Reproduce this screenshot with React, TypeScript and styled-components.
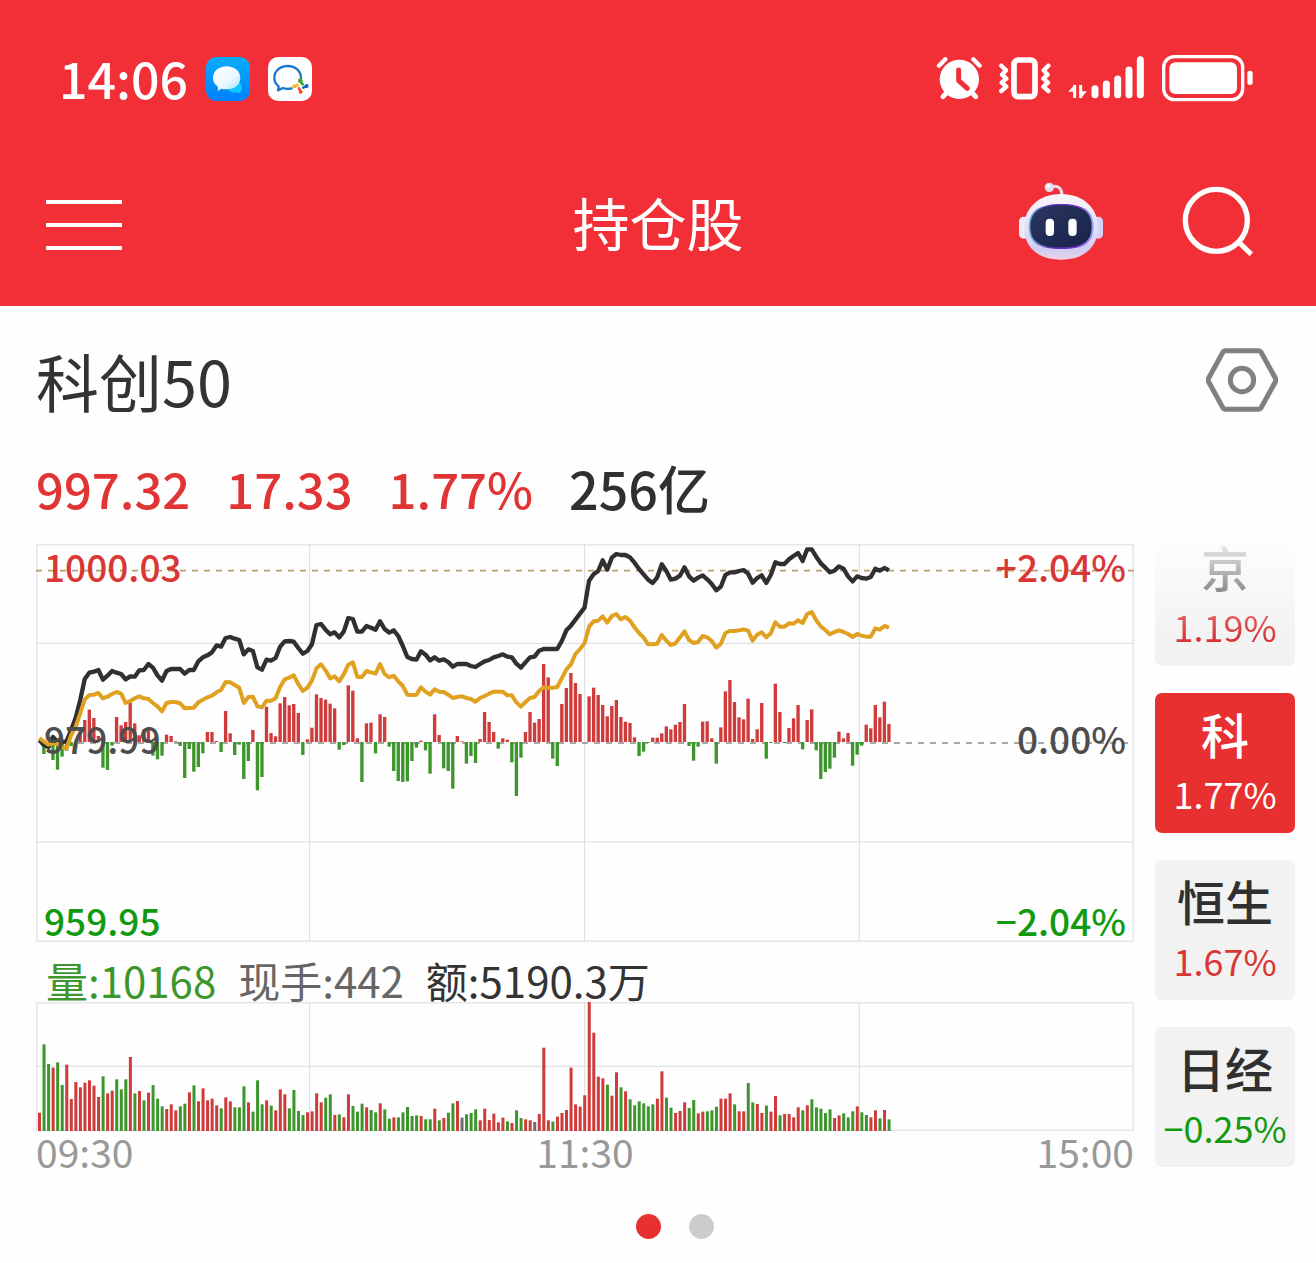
import React, { useState } from "react";
import styled, { createGlobalStyle } from "styled-components";

const RISE = "#cf3a3a";
const FALL = "#3c962c";
const FLAT = "#6e6a70";

const GlobalStyle = createGlobalStyle`
  *, *::before, *::after { box-sizing: border-box; }
  body {
    margin: 0;
    background: #fefefe;
    color: #333;
    font-family: "Noto Sans CJK SC", "Noto Sans", sans-serif;
  }
  button { display: block; font: inherit; color: inherit; border: 0; padding: 0; background: none; cursor: pointer; }
  svg { display: block; }
  h1, h2, p { margin: 0; padding: 0; font-weight: inherit; }
`;

const Header = styled.header`
  background: #f22f37;
  color: #fff;
  padding: 56px 0 40px;
`;
const StatusBar = styled.div`
  display: flex;
  justify-content: space-between;
  align-items: center;
  height: 46px;
  padding: 0 63px 0 59px;
`;
const StatusGroup = styled.div<{ $gap: number }>`
  display: flex;
  align-items: center;
  gap: ${(p) => p.$gap}px;
`;
const Clock = styled.time`
  padding-bottom: 4px;
  font-size: 50px;
  line-height: 42px;
  font-weight: 500;
`;
const NavBar = styled.nav`
  display: grid;
  grid-template-columns: 1fr auto 1fr;
  align-items: center;
  height: 84px;
  margin-top: 80px;
  padding: 0 46px;
`;
const NavTitle = styled.h1`
  padding-bottom: 8px;
  font-size: 57px;
  line-height: 76px;
`;
const NavActions = styled.div`
  display: flex;
  align-items: center;
  justify-content: flex-end;
  gap: 79px;
  padding: 0 17px 8px 0;
`;
const Content = styled.main`
  display: grid;
  grid-template-columns: minmax(0, 1fr) 140px;
  column-gap: 21px;
  padding: 32px 21px 0 36px;
`;
const Main = styled.section`
  min-width: 0;
`;
const IndexName = styled.h2`
  font-size: 63px;
  line-height: 84px;
`;
const QuoteRow = styled.p`
  display: flex;
  gap: 36px;
  margin-top: 36px;
  line-height: 60px;
  font-weight: 500;
`;
const Quote = styled.span<{ $rise?: boolean }>`
  color: ${(p) => (p.$rise ? "#e13434" : "#303030")};
  font-size: ${(p) => (p.$rise ? 49 : 52)}px;
`;
const ChartBox = styled.div<{ $height: number }>`
  position: relative;
  height: ${(p) => p.$height}px;
  svg { width: 100%; height: 100%; }
`;
const PriceChart = styled(ChartBox)`
  margin-top: 26px;
`;
const ScaleLabel = styled.span<{ $color: string; $side: "left" | "right"; $top: number }>`
  position: absolute;
  top: ${(p) => p.$top}px;
  ${(p) => p.$side}: 8px;
  color: ${(p) => p.$color};
  font-size: 37px;
  line-height: 44px;
  font-weight: 500;
`;
const VolumeLegend = styled.p`
  display: flex;
  gap: 22px;
  margin-top: 16px;
  padding-left: 10px;
  font-size: 42px;
  line-height: 44px;
`;
const LegendItem = styled.span<{ $color: string }>`
  color: ${(p) => p.$color};
`;
const TimeAxis = styled.div`
  display: flex;
  justify-content: space-between;
  color: #999;
  font-size: 39px;
  line-height: 40px;
`;
const Side = styled.aside`
  display: flex;
  flex-direction: column;
`;
const SettingsButton = styled.button`
  align-self: flex-end;
  margin: 10px 17px 114px 0;
`;
const IndexList = styled.div`
  display: flex;
  flex-direction: column;
  gap: 27px;
`;
const IndexCard = styled.button<{ $active: boolean; $faded?: boolean }>`
  display: flex;
  flex-direction: column;
  align-items: center;
  height: 140px;
  padding-top: 10px;
  border-radius: 7px;
  background: ${(p) => (p.$active ? "#e83030" : "#f2f2f2")};
  color: ${(p) => (p.$active ? "#fff" : "#303030")};
  mask-image: ${(p) => (p.$faded ? "linear-gradient(transparent 8px, #000 112px)" : "none")};
`;
const CardName = styled.span`
  font-size: 48px;
  line-height: 60px;
  font-weight: 500;
`;
const CardChange = styled.span<{ $color: string }>`
  font-size: 36px;
  line-height: 60px;
  color: ${(p) => p.$color};
`;
const Pager = styled.div`
  display: flex;
  justify-content: center;
  gap: 28px;
  margin-left: 34px;
  padding: 43px 0 24px;
`;
const PagerDot = styled.button<{ $active: boolean }>`
  width: 25px;
  height: 25px;
  border-radius: 50%;
  background: ${(p) => (p.$active ? "#e83030" : "#ccc")};
`;

/* Minute series. Chart units are thirds of a pixel at the design width. */
const STEP = 13.63;
const FIRST = 10;
const xAt = (i: number) => FIRST + i * STEP;

const INDEX_LINE = [
  615, 630, 636, 606, 620, 622, 618, 585, 548, 495, 432, 413, 410, 405, 434, 422, 408, 413, 417, 433,
  424, 425, 406, 405, 387, 398, 421, 437, 408, 402, 402, 402, 416, 405, 405, 379, 367, 361, 352, 331,
  335, 309, 306, 311, 315, 358, 343, 348, 397, 404, 374, 377, 369, 335, 319, 318, 320, 339, 356, 348,
  328, 270, 267, 284, 298, 292, 307, 290, 249, 252, 290, 290, 273, 278, 284, 259, 282, 293, 286, 303,
  333, 366, 372, 374, 349, 359, 376, 367, 377, 373, 381, 395, 387, 387, 387, 393, 396, 387, 379, 375,
  367, 363, 358, 365, 367, 386, 398, 382, 367, 365, 347, 342, 342, 342, 342, 318, 286, 272, 254, 236,
  218, 137, 118, 108, 76, 104, 68, 57, 60, 60, 67, 83, 102, 118, 134, 144, 127, 88, 108, 134,
  131, 122, 97, 124, 137, 128, 121, 133, 147, 166, 155, 120, 112, 112, 108, 105, 116, 143, 129, 121,
  144, 120, 82, 87, 87, 73, 63, 54, 78, 43, 43, 65, 85, 98, 112, 107, 94, 101, 124, 139,
  124, 129, 131, 126, 101, 107, 99, 106,
];
const AVERAGE_LINE = [
  609, 619, 629, 625, 627, 636, 640, 600, 575, 535, 494, 480, 479, 474, 490, 485, 477, 471, 476, 504,
  498, 490, 484, 490, 492, 504, 514, 529, 504, 501, 501, 505, 520, 519, 518, 502, 494, 487, 482, 472,
  465, 441, 442, 450, 458, 504, 486, 485, 514, 517, 497, 497, 490, 456, 433, 428, 421, 447, 468, 458,
  437, 400, 388, 406, 430, 424, 439, 418, 389, 382, 426, 426, 408, 412, 416, 387, 417, 427, 422, 439,
  453, 479, 480, 479, 457, 470, 479, 463, 470, 471, 479, 489, 486, 484, 489, 492, 500, 489, 483, 476,
  470, 470, 470, 481, 481, 502, 515, 501, 489, 486, 468, 457, 458, 458, 456, 430, 403, 388, 357, 342,
  325, 275, 259, 257, 244, 263, 243, 237, 253, 246, 257, 277, 294, 308, 328, 328, 326, 300, 317, 330,
  325, 307, 289, 315, 324, 321, 303, 307, 318, 338, 326, 294, 288, 288, 286, 283, 287, 317, 299, 292,
  307, 295, 262, 275, 275, 265, 266, 256, 264, 237, 231, 256, 274, 285, 298, 291, 286, 291, 297, 306,
  297, 302, 305, 305, 280, 284, 273, 278,
];
const MOMENTUM = [
  0, -36, -14, -54, -83, -44, -26, -12, -20, 33, 66, 97, 72, 18, -77, -84, -11, 75, 50, 60,
  118, 56, 20, 38, 38, -41, -52, -41, 22, 18, 2, -12, -108, -21, -89, -75, -34, 30, 30, 3,
  -30, 93, 26, -39, -8, -111, -57, 36, -145, -105, 106, 27, 17, 116, 135, 110, 114, 87, -39, 8,
  43, 143, 132, 127, 115, 101, -23, -9, 170, 154, 11, -120, 56, 58, -34, 83, 75, -14, -87, -117,
  -120, -118, -57, -17, 4, -25, -95, 83, 21, -79, -87, -140, 18, 2, -65, -42, -63, 9, 90, 60,
  30, -20, 11, 7, -61, -162, -47, 30, 90, 58, 69, 234, 194, -50, -72, 114, 162, 207, 177, 144,
  0, 137, 163, 141, 111, 77, 108, 126, 75, 61, 57, 14, -42, -29, -3, 13, 13, 26, 47, 38,
  52, 60, 114, -12, -56, -14, 61, 62, 11, -65, 44, 152, 186, 120, 74, 68, 130, 9, 38, 117,
  -50, -3, 175, 90, -3, 42, 71, 111, -22, 66, 98, -25, -111, -90, -80, -47, 31, 11, 27, -71,
  -38, -11, 52, 41, 111, 74, 121, 54,
];
/* Each entry: r = rise, g = fall, x = flat, followed by the bar height. */
const VOLUME = (
  "r55 g260 g201 r190 g206 g138 r199 r96 r147 r131 r145 r152 r136 r102 g164 r113 r121 g155 g125 g155 " +
  "r222 g113 r120 g92 r115 g138 g97 g74 r66 r80 r62 g74 g82 r116 g137 r89 r128 r92 r97 r77 " +
  "g68 r101 r89 g71 g71 g134 r86 g58 g152 g80 r92 g76 r62 r125 r110 g68 g123 g60 g48 r56 " +
  "r59 r113 r86 g100 g110 r48 g50 r41 r110 g75 g58 g82 r71 g63 g56 r83 g65 g37 r41 g41 " +
  "g56 g72 g45 g47 r45 g35 g35 r67 g32 r39 g55 g83 r90 x40 g50 g54 g65 r32 r67 r33 " +
  "r52 r26 r40 g29 r24 g62 g39 r35 r32 x27 r51 r250 r32 g28 r43 r54 r63 r190 r80 r73 " +
  "r107 r387 r295 r163 r158 g139 r106 r176 g131 r119 g95 g77 g89 g83 g74 g80 r97 r179 g100 g70 " +
  "r54 r60 r86 g69 g93 r53 r58 g59 g62 g73 r97 r97 r113 g80 r59 r59 g144 g86 r81 r54 " +
  "g76 r58 r105 g47 r51 r51 r41 r71 g62 r77 g95 g71 g67 g54 g65 r39 r47 g53 g41 g59 " +
  "r74 g56 g48 r41 r62 g38 r63 g35"
).split(" ");

const toPoints = (series: number[]) => series.map((y, i) => `${xAt(i)},${y - 27}`).join(" ");

const Grid = ({ height, rows }: { height: number; rows: number[] }) => (
  <g fill="none" stroke="#dcdcdc" strokeWidth={3}>
    <rect x={2} y={2} width={3290} height={height - 4} stroke="#e6e6e6" strokeWidth={5} />
    {[821, 1646, 2470].map((x) => (
      <line key={x} x1={x} x2={x} y1={0} y2={height} />
    ))}
    {rows.map((y) => (
      <line key={y} x1={0} x2={3294} y1={y} y2={y} />
    ))}
  </g>
);

const PriceSvg = () => (
  <svg viewBox="0 0 3294 1194" preserveAspectRatio="none" role="img" aria-label="科创50 分时走势">
    <Grid height={1194} rows={[298, 894]} />
    <line x1={0} x2={3294} y1={80} y2={80} stroke="#b8a070" strokeWidth={5} strokeDasharray="18 18" />
    <line x1={18} x2={3294} y1={597} y2={597} stroke="#8f8b8b" strokeWidth={5} strokeDasharray="18 18" />
    {MOMENTUM.map((v, i) =>
      v === 0 ? null : (
        <rect
          key={i}
          x={xAt(i) - 5}
          y={v > 0 ? 594 - v : 594}
          width={10}
          height={Math.abs(v)}
          fill={v > 0 ? RISE : FALL}
        />
      )
    )}
    <polyline points={toPoints(INDEX_LINE)} fill="none" stroke="#303030" strokeWidth={13} strokeLinejoin="round" />
    <polyline points={toPoints(AVERAGE_LINE)} fill="none" stroke="#e0a020" strokeWidth={12} strokeLinejoin="round" />
  </svg>
);

const VolumeSvg = () => (
  <svg viewBox="0 0 3294 387" preserveAspectRatio="none" role="img" aria-label="成交量">
    <Grid height={387} rows={[193]} />
    {VOLUME.map((entry, i) => {
      const h = Number(entry.slice(1));
      const fill = entry[0] === "r" ? RISE : entry[0] === "g" ? FALL : FLAT;
      return <rect key={i} x={xAt(i) - 4} y={387 - h} width={9} height={h} fill={fill} />;
    })}
  </svg>
);

const MessageAppIcon = () => (
  <svg width="44" height="44" viewBox="0 0 132 132" aria-hidden="true">
    <defs>
      <linearGradient id="msgBg" x1="0" y1="0" x2="0" y2="1">
        <stop offset="0" stopColor="#06adfb" />
        <stop offset="1" stopColor="#0080fc" />
      </linearGradient>
      <linearGradient id="msgFg" x1="0" y1="0" x2="1" y2="1">
        <stop offset="0" stopColor="#fff" />
        <stop offset=".6" stopColor="#e8f7ff" />
        <stop offset="1" stopColor="#9adcff" />
      </linearGradient>
    </defs>
    <rect width="132" height="132" rx="32" fill="url(#msgBg)" />
    <path d="M96 74c8 4 13 10 12 18 0 5-2 8-5 11l1 6-10-3c-12 2-22-1-28-8z" fill="#10c8fc" />
    <path d="M62 28c24 0 41 15 41 35S86 97 62 97c-6 0-11-1-16-2l-10 7-1-14C26 82 21 73 21 63c0-20 17-35 41-35z" fill="url(#msgFg)" />
  </svg>
);

const WorkChatIcon = () => (
  <svg width="44" height="44" viewBox="0 0 132 132" aria-hidden="true">
    <rect width="132" height="132" rx="30" fill="#fff" />
    <path
      d="M99 63C99 42 82 27 59 27S19 43 19 62c0 11 5 20 13 26l-2 12 14-7c8 3 18 3 27 1"
      fill="none"
      stroke="#1a78d0"
      strokeWidth="7"
      strokeLinejoin="round"
      strokeLinecap="round"
    />
    <g strokeLinecap="round" strokeWidth="8" fill="none">
      <path d="M96 72l8 10" stroke="#43a631" />
      <path d="M116 87l-10 5" stroke="#1369c4" />
      <path d="M98 105l-5-11" stroke="#e8572a" />
      <path d="M78 89l11-5" stroke="#f6bb22" />
    </g>
    <g>
      <circle cx="97" cy="71" r="7" fill="#43a631" />
      <circle cx="116" cy="87" r="6" fill="#1369c4" />
      <circle cx="98" cy="104" r="6" fill="#e8572a" />
      <circle cx="79" cy="88" r="6" fill="#f6bb22" />
    </g>
  </svg>
);

const AlarmIcon = () => (
  <svg width="46" height="46" viewBox="46 50 138 138" fill="none" strokeLinecap="round" aria-hidden="true">
    <circle cx="116" cy="120" r="59" fill="#fff" />
    <path d="M55 79l19-19M158 60l19 19" stroke="#fff" strokeWidth="13" />
    <path d="M78 160l-11 12M154 160l11 12" stroke="#fff" strokeWidth="15" />
    <path d="M114 92v32l26 23" stroke="#f22f37" strokeWidth="15" strokeLinejoin="round" />
  </svg>
);

const VibrateIcon = () => (
  <svg width="53" height="46" viewBox="236 50 159 138" fill="none" stroke="#fff" aria-hidden="true">
    <rect x="281" y="62" width="63" height="110" rx="13" strokeWidth="17" />
    <path
      d="M243 79l14 14-12 13 13 12-14 12 14 12-15 13M384 79l-14 14 12 13-13 12 14 12-14 12 15 13"
      strokeWidth="13"
      strokeLinecap="round"
      strokeLinejoin="round"
    />
  </svg>
);

const SignalIcon = () => (
  <svg width="76" height="46" viewBox="446 50 228 138" fill="none" stroke="#fff" overflow="visible" aria-hidden="true">
    <path d="M524 148v18M558 134v32M592 119v47M626 92v74M660 61v105" strokeWidth="21" strokeLinecap="round" />
    <path d="M463 137v39M481 137v39" strokeWidth="9" />
    <path d="M444 157l20-22v22zM500 156l-20 22v-22z" fill="#fff" stroke="none" />
  </svg>
);

const BatteryIcon = () => (
  <svg width="91" height="46" viewBox="726 48 273 138" overflow="visible" aria-hidden="true">
    <rect x="731" y="50" width="237" height="129" rx="32" fill="none" stroke="#fff" strokeWidth="10" />
    <rect x="748" y="67" width="203" height="95" rx="18" fill="#fff" />
    <rect x="982" y="92" width="16" height="43" rx="8" fill="#fff" />
  </svg>
);

const MenuIcon = () => (
  <svg width="76" height="52" viewBox="0 0 76 52" stroke="#fff" strokeWidth="4" aria-hidden="true">
    <path d="M0 3h76M0 26h76M0 49h76" />
  </svg>
);

const RobotIcon = () => (
  <svg width="84" height="78" viewBox="57 28 252 234" aria-hidden="true">
    <defs>
      <linearGradient id="shell" x1="0" y1="0" x2="0" y2="1">
        <stop offset="0" stopColor="#faf6fb" />
        <stop offset=".55" stopColor="#e2dff6" />
        <stop offset=".85" stopColor="#cfccf4" />
        <stop offset="1" stopColor="#f2d3e2" />
      </linearGradient>
      <linearGradient id="rim" x1="0" y1="0" x2="1" y2="0">
        <stop offset="0" stopColor="#70b8dc" />
        <stop offset=".35" stopColor="#5631b8" />
        <stop offset=".75" stopColor="#7430cf" />
        <stop offset="1" stopColor="#9aa6f3" />
      </linearGradient>
      <linearGradient id="visor" x1="0" y1="0" x2="1" y2="1">
        <stop offset="0" stopColor="#2b3760" />
        <stop offset="1" stopColor="#18224a" />
      </linearGradient>
    </defs>
    <path d="M155 42c18-4 30 4 31 24" fill="none" stroke="#efe2ee" strokeWidth="9" />
    <circle cx="148" cy="44" r="14" fill="#e4dced" />
    <circle cx="145" cy="40" r="6" fill="#fff" />
    <rect x="57" y="132" width="30" height="66" rx="14" fill="#efebfa" />
    <rect x="279" y="132" width="30" height="66" rx="14" fill="#d5d3f7" />
    <path d="M183 64c68 0 111 44 111 100 0 60-42 97-111 97S72 224 72 164C72 108 115 64 183 64z" fill="url(#shell)" />
    <path d="M184 94c68 0 97 22 97 68s-26 67-97 67-98-21-98-67 30-68 98-68z" fill="url(#rim)" />
    <path d="M183 98c64 0 92 20 92 64s-26 62-92 62-92-18-92-62 28-64 92-64z" fill="url(#visor)" />
    <rect x="137" y="138" width="25" height="52" rx="12" fill="#fff" />
    <rect x="205" y="138" width="25" height="52" rx="12" fill="#fff" />
  </svg>
);

const SearchIcon = () => (
  <svg width="71" height="70" viewBox="546 48 213 210" fill="none" stroke="#fff" aria-hidden="true">
    <circle cx="649" cy="151" r="93" strokeWidth="16" />
    <path d="M717 217l37 36" strokeWidth="15" />
  </svg>
);

const SettingsIcon = () => (
  <svg width="72" height="64" viewBox="198 24 216 192" fill="none" stroke="#808080" aria-hidden="true">
    <path d="M255 32h102q4 0 6 4l46 84-46 84q-2 4-6 4H255q-4 0-6-4l-46-84 46-84q2-4 6-4z" strokeWidth="15" strokeLinejoin="round" />
    <circle cx="306" cy="120" r="35" strokeWidth="15" />
  </svg>
);

const INDICES = [
  { name: "京", change: "1.19%", color: "#d93636", faded: true },
  { name: "科", change: "1.77%", color: "#d93636" },
  { name: "恒生", change: "1.67%", color: "#d93636" },
  { name: "日经", change: "−0.25%", color: "#109a10" },
];

export default function App() {
  const [active, setActive] = useState("科");
  const [page, setPage] = useState(0);
  return (
    <>
      <GlobalStyle />
      <Header>
        <StatusBar>
          <StatusGroup $gap={18}>
            <Clock>14:06</Clock>
            <MessageAppIcon />
            <WorkChatIcon />
          </StatusGroup>
          <StatusGroup $gap={17}>
            <AlarmIcon />
            <VibrateIcon />
            <SignalIcon />
            <BatteryIcon />
          </StatusGroup>
        </StatusBar>
        <NavBar>
          <div>
            <button aria-label="菜单"><MenuIcon /></button>
          </div>
          <NavTitle>持仓股</NavTitle>
          <NavActions>
            <button aria-label="助手"><RobotIcon /></button>
            <button aria-label="搜索"><SearchIcon /></button>
          </NavActions>
        </NavBar>
      </Header>
      <Content>
        <Main>
          <IndexName>科创50</IndexName>
          <QuoteRow>
            <Quote $rise>997.32</Quote>
            <Quote $rise>17.33</Quote>
            <Quote $rise>1.77%</Quote>
            <Quote>256亿</Quote>
          </QuoteRow>
          <PriceChart $height={398}>
            <PriceSvg />
            <ScaleLabel $color="#d93636" $side="left" $top={0}>1000.03</ScaleLabel>
            <ScaleLabel $color="#4d4d4d" $side="left" $top={172}>979.99</ScaleLabel>
            <ScaleLabel $color="#109a10" $side="left" $top={354}>959.95</ScaleLabel>
            <ScaleLabel $color="#d93636" $side="right" $top={0}>+2.04%</ScaleLabel>
            <ScaleLabel $color="#4d4d4d" $side="right" $top={172}>0.00%</ScaleLabel>
            <ScaleLabel $color="#109a10" $side="right" $top={354}>−2.04%</ScaleLabel>
          </PriceChart>
          <VolumeLegend>
            <LegendItem $color="#3c962c">量:10168</LegendItem>
            <LegendItem $color="#666">现手:442</LegendItem>
            <LegendItem $color="#333">额:5190.3万</LegendItem>
          </VolumeLegend>
          <ChartBox $height={129}>
            <VolumeSvg />
          </ChartBox>
          <TimeAxis>
            <time>09:30</time>
            <time>11:30</time>
            <time>15:00</time>
          </TimeAxis>
        </Main>
        <Side>
          <SettingsButton aria-label="设置"><SettingsIcon /></SettingsButton>
          <IndexList>
            {INDICES.map((item) => (
              <IndexCard
                key={item.name}
                $active={active === item.name}
                $faded={item.faded}
                aria-pressed={active === item.name}
                onClick={() => setActive(item.name)}
              >
                <CardName>{item.name}</CardName>
                <CardChange $color={active === item.name ? "#fff" : item.color}>{item.change}</CardChange>
              </IndexCard>
            ))}
          </IndexList>
        </Side>
      </Content>
      <Pager>
        {[0, 1].map((n) => (
          <PagerDot key={n} $active={page === n} aria-label={`第${n + 1}页`} onClick={() => setPage(n)} />
        ))}
      </Pager>
    </>
  );
}
